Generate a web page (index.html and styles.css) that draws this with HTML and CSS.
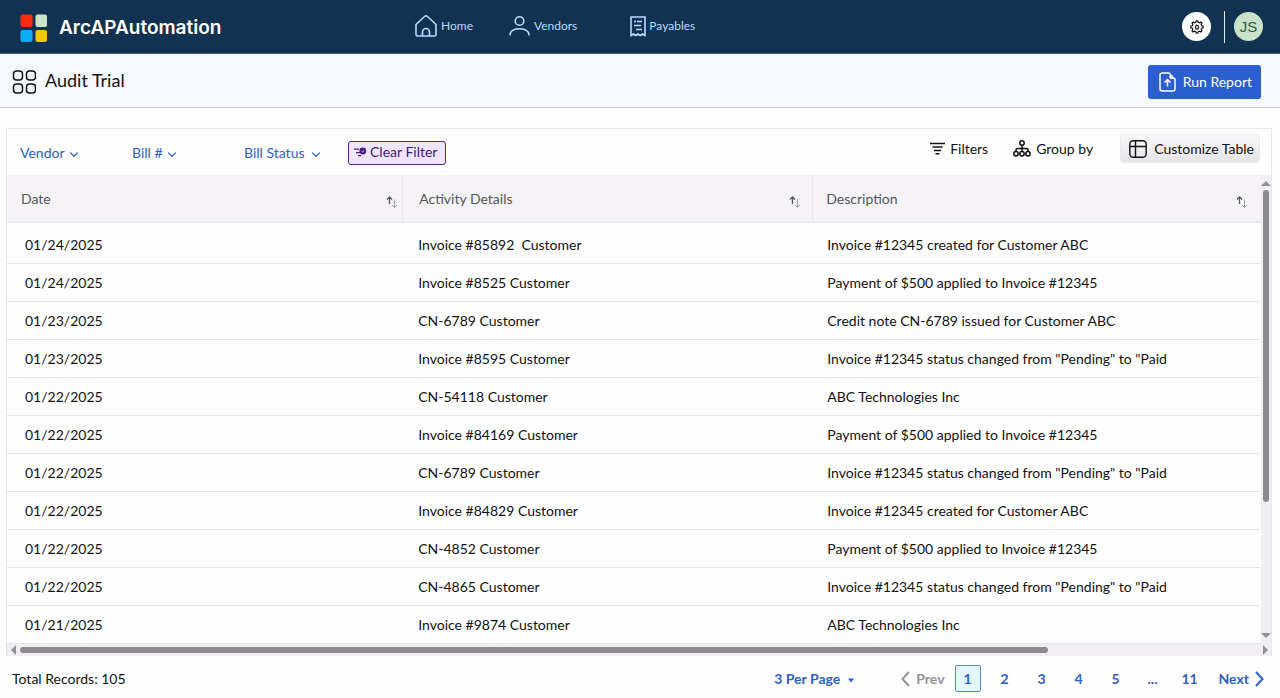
FILE: index.html
```html
<!DOCTYPE html>
<html lang="en">
<head>
<meta charset="utf-8">
<meta name="viewport" content="width=device-width, initial-scale=1">
<title>ArcAPAutomation - Audit Trial</title>
<link rel="stylesheet" href="styles.css">
</head>
<body>
<svg class="defs" aria-hidden="true">
  <symbol id="sort" viewBox="0 0 12 14"><path d="M3.5 9V2M1 4.5 3.5 2 6 4.500" fill="none" stroke="#555" stroke-width="1.300"/><path d="M8.500 4.500v8M6 10l2.500 2.500L11 10" fill="none" stroke="#a2a2a2"/></symbol>
  <symbol id="chevron" viewBox="0 0 8 6"><path d="M.7 1 4 4.400 7.300 1" fill="none" stroke="currentColor" stroke-width="1.200" stroke-linecap="round"/></symbol>
</svg>
<header class="topbar">
  <a class="brand" href="#">
    <svg width="28" height="28" viewBox="0 0 28 28"><rect x=".5" y=".5" width="12" height="12.500" rx="2" fill="#ff2a10"/><rect x="15.500" y=".5" width="11.500" height="12.500" rx="2" fill="#cbe3cd"/><rect x=".5" y="16" width="12" height="12" rx="2" fill="#08adf5"/><rect x="15.500" y="16" width="11.500" height="12" rx="2" fill="#f0c800"/></svg>
    <span>ArcAPAutomation</span>
  </a>
  <nav class="nav">
    <a href="#"><svg width="22" height="22" viewBox="0 0 22 22"><path d="M1 9.500 9.500 1.500Q11 .3 12.500 1.500L21 9.500V19.500Q21 21 19.500 21H2.500Q1 21 1 19.500ZM7.500 21V17a3.500 3.500 0 0 1 7 0v4"/></svg>Home</a>
    <a href="#"><svg width="21" height="22" viewBox="0 0 21 22"><circle cx="10.500" cy="6" r="4.300"/><path d="M1 20.500V19Q2.500 13.800 10.500 13.800T20 19v1.500"/></svg>Vendors</a>
    <a href="#"><svg width="16" height="22" viewBox="0 0 16 22"><path d="M1 20.500V2h14v18.500L12.600 19l-2.300 1.500L8 19l-2.300 1.500L3.400 19ZM4 6.500h2M7 6.500h5M4 10.500h7M6 14.500h6"/></svg>Payables</a>
  </nav>
  <div class="account">
    <button class="settings" aria-label="Settings"><svg width="14" height="14" viewBox="0 0 14 14"><path d="M5.800 2.300 6.300.8h1.400l.5 1.500 1.300.5 1.400-.7 1 1-.7 1.400.5 1.300 1.500.5v1.400l-1.500.5-.5 1.300.7 1.400-1 1-1.400-.7-1.300.5-.5 1.500H6.300l-.5-1.500-1.300-.5-1.400.7-1-1 .7-1.400-.5-1.300L.8 7.700V6.300l1.500-.5.5-1.300-.7-1.400 1-1 1.400.7Z"/><ellipse cx="7" cy="7.200" rx="1.500" ry="2"/></svg></button>
    <button class="avatar">JS</button>
  </div>
</header>
<section class="titlebar">
  <h1><svg width="24" height="24" viewBox="0 0 24 24"><rect x="1.500" y="1" width="9" height="9" rx="3"/><rect x="14.500" y="1" width="9" height="9" rx="3"/><rect x="1.500" y="14" width="9" height="9" rx="3"/><rect x="14.500" y="14" width="9" height="9" rx="3"/></svg><span>Audit Trial</span></h1>
  <button class="run"><svg width="17" height="20" viewBox="0 0 17 20"><path d="M10.500 1H3.500Q1 1 1 3v14q0 2 2.500 2h10q2.500 0 2.500-2V6.500M8.500 14.500V8M5.500 10.500l3-3 3 3" fill="none" stroke="#fff" stroke-width="1.500"/><path d="M10.500.5 16.500 7h-4.500q-1.500 0-1.500-1.500Z" fill="#fff"/></svg>Run Report</button>
</section>
<main>
  <section class="panel">
    <div class="toolbar">
      <div class="filters">
        <label class="pick"><select aria-label="Vendor"><option>Vendor</option></select><svg width="8" height="6"><use href="#chevron"/></svg></label>
        <label class="pick"><select aria-label="Bill number"><option>Bill #</option></select><svg width="8" height="6"><use href="#chevron"/></svg></label>
        <label class="pick"><select aria-label="Bill status"><option>Bill Status</option></select><svg width="8" height="6"><use href="#chevron"/></svg></label>
        <button class="clear"><svg width="13" height="10" viewBox="0 0 13 10"><circle cx="8.800" cy="4" r="3.400" fill="#4a1d84"/><path d="M7.800 4.300 8.600 5 10 3.300" stroke="#efe5fc" stroke-width=".8" fill="none"/><path d="M0 2.200h5M2 5.700h4M4 8.700h3" stroke="#4a1d84" stroke-width="1.200"/></svg>Clear Filter</button>
      </div>
      <div class="actions">
        <button class="action"><svg width="15" height="13" viewBox="0 0 15 13"><path d="M0 1.500h15M2.500 5h10M4 8.500h7M5.500 11.800h4" stroke="#111" stroke-width="1.600"/></svg>Filters</button>
        <button class="action group"><svg width="18" height="17" viewBox="0 0 18 17"><g fill="none" stroke="#111" stroke-width="1.500"><circle cx="9" cy="3" r="2.200"/><circle cx="3" cy="13.700" r="2.200"/><circle cx="9" cy="13.700" r="2.200"/><circle cx="15" cy="13.700" r="2.200"/><path d="M9 5.200v6M3 11.500V9.700Q3 8.500 4.500 8.500h9Q15 8.500 15 9.700v1.800"/></g></svg>Group by</button>
        <button class="action custom"><svg width="18" height="18" viewBox="0 0 18 18"><rect x=".8" y=".8" width="16.400" height="16.400" rx="3.500" fill="none" stroke="#111" stroke-width="1.400"/><path d="M6.500 1v16M1 6.500h16" stroke="#111" stroke-width="1.400"/></svg>Customize Table</button>
      </div>
    </div>
    <div class="grid">
      <table>
        <thead><tr>
          <th scope="col"><div class="head">Date<button aria-label="Sort by date"><svg width="12" height="14"><use href="#sort"/></svg></button></div></th>
          <th scope="col"><div class="head">Activity Details<button aria-label="Sort by activity"><svg width="12" height="14"><use href="#sort"/></svg></button></div></th>
          <th scope="col"><div class="head">Description<button aria-label="Sort by description"><svg width="12" height="14"><use href="#sort"/></svg></button></div></th>
        </tr></thead>
        <tbody>
          <tr><td>01/24/2025</td><td>Invoice #85892&nbsp; Customer</td><td>Invoice #12345 created for Customer ABC</td></tr>
          <tr><td>01/24/2025</td><td>Invoice #8525 Customer</td><td>Payment of $500 applied to Invoice #12345</td></tr>
          <tr><td>01/23/2025</td><td>CN-6789 Customer</td><td>Credit note CN-6789 issued for Customer ABC</td></tr>
          <tr><td>01/23/2025</td><td>Invoice #8595 Customer</td><td>Invoice #12345 status changed from "Pending" to "Paid</td></tr>
          <tr><td>01/22/2025</td><td>CN-54118 Customer</td><td>ABC Technologies Inc</td></tr>
          <tr><td>01/22/2025</td><td>Invoice #84169 Customer</td><td>Payment of $500 applied to Invoice #12345</td></tr>
          <tr><td>01/22/2025</td><td>CN-6789 Customer</td><td>Invoice #12345 status changed from "Pending" to "Paid</td></tr>
          <tr><td>01/22/2025</td><td>Invoice #84829 Customer</td><td>Invoice #12345 created for Customer ABC</td></tr>
          <tr><td>01/22/2025</td><td>CN-4852 Customer</td><td>Payment of $500 applied to Invoice #12345</td></tr>
          <tr><td>01/22/2025</td><td>CN-4865 Customer</td><td>Invoice #12345 status changed from "Pending" to "Paid</td></tr>
          <tr><td>01/21/2025</td><td>Invoice #9874 Customer</td><td>ABC Technologies Inc</td></tr>
        </tbody>
      </table>
      <div class="vbar" aria-hidden="true">
        <svg width="10" height="6" viewBox="0 0 10 6"><path d="M5 0 10 5H0Z"/></svg>
        <div class="track"><div class="thumb"></div></div>
        <svg width="10" height="6" viewBox="0 0 10 6"><path d="M0 0h10L5 5Z"/></svg>
      </div>
      <div class="hbar" aria-hidden="true">
        <svg width="5" height="10" viewBox="0 0 5 10"><path d="M5 0v10L0 5Z"/></svg>
        <div class="track"><div class="thumb"></div></div>
        <svg width="5" height="10" viewBox="0 0 5 10"><path d="M0 0v10L5 5Z"/></svg>
      </div>
    </div>
  </section>
  <footer>
    <span>Total Records: 105</span>
    <div class="paging">
      <label class="pick perpage"><select aria-label="Records per page"><option>3 Per Page</option></select><svg width="8" height="5" viewBox="0 0 8 5"><path d="M1 .5h6L4 4.500Z" fill="currentColor" stroke="none"/></svg></label>
      <nav class="pages" aria-label="Pages">
        <button class="prev" disabled><svg width="9" height="16" viewBox="0 0 9 16"><path d="M8 1 1.500 8 8 15"/></svg>Prev</button>
        <button class="page current" aria-current="page">1</button>
        <button class="page">2</button>
        <button class="page">3</button>
        <button class="page">4</button>
        <button class="page">5</button>
        <button class="page">...</button>
        <button class="page">11</button>
        <button class="next">Next<svg width="9" height="16" viewBox="0 0 9 16"><path d="M1 1l6.500 7L1 15"/></svg></button>
      </nav>
    </div>
  </footer>
</main>
</body>
</html>
```
FILE: styles.css
```css
* { box-sizing: border-box; }
body {
  margin: 0;
  background: #fefefe;
  color: #111;
  font: 14px/20px Lato, "Noto Sans", sans-serif;
}
svg { display: block; flex: none; }
button, select {
  appearance: none;
  margin: 0;
  padding: 0;
  border: 0;
  background: none;
  color: inherit;
  font: inherit;
}
a { color: inherit; text-decoration: none; }
.defs { position: absolute; width: 0; height: 0; }

.topbar {
  display: grid;
  grid-template-columns: 395px 1fr auto;
  align-items: center;
  height: 54px;
  padding: 0 17px 0 20px;
  background: #113250;
  border-bottom: 1px solid #45607a;
}
.brand {
  display: flex;
  align-items: center;
  gap: 11px;
  padding-top: 2px;
  color: #fff;
  font: 600 19px/24px Inter, sans-serif;
}
.nav { display: flex; padding-bottom: 1px; color: #b9dcff; font-size: 12px; }
.nav a { display: flex; align-items: center; gap: 4px; }
.nav a + a { margin-left: 36px; }
.nav a + a + a { gap: 3px; margin-left: 53px; }
.nav svg { fill: none; stroke: currentColor; stroke-width: 1.6; }
.account { display: flex; align-items: center; }
.settings {
  display: grid;
  place-items: center;
  width: 29px;
  height: 29px;
  margin-right: 13px;
  border-radius: 50%;
  background: #fff;
}
.settings svg { fill: none; stroke: #111; stroke-width: 1.2; }
.account::before { content: ""; order: 1; width: 1px; height: 32px; margin-right: 9px; background: #e6ebf0; }
.avatar {
  order: 2;
  width: 29px;
  height: 29px;
  border-radius: 50%;
  background: #c9e2c9;
  color: #2e5b3c;
  font: 15px/29px "Liberation Sans", Arial, sans-serif;
}

.titlebar {
  display: flex;
  align-items: center;
  justify-content: space-between;
  height: 54px;
  padding: 2px 19px 0 12px;
  background: #f5f9ff;
  border-bottom: 1px solid #c3c4cc;
}
h1 { display: flex; align-items: center; gap: 9px; margin: 0; font-size: 18px; font-weight: 400; }
h1 span { padding-bottom: 3px; }
h1 svg { fill: none; stroke: #111; stroke-width: 1.5; }
.run {
  display: flex;
  align-items: center;
  gap: 7px;
  height: 34px;
  padding: 0 9px 0 11px;
  border-radius: 3px;
  background: #2b5fd0;
  color: #fff;
}

main { padding: 20px 8px 0 6px; }
.panel { border: 1px solid #e6e5e8; border-bottom: 0; }
.toolbar {
  display: flex;
  justify-content: space-between;
  height: 46px;
  padding: 0 11px 0 13px;
}
.filters { display: flex; align-items: center; padding-top: 2px; color: #2d5fc4; }
.pick { display: flex; align-items: center; gap: 5px; }
.pick svg { margin-top: 3px; }
.pick:nth-child(1) { margin-right: 54px; }
.pick:nth-child(2) { margin-right: 68px; }
.pick:nth-child(3) { gap: 7px; margin-right: 28px; }
.clear {
  display: flex;
  align-items: center;
  gap: 3px;
  height: 24px;
  padding: 0 8px 2px 5px;
  border: 1px solid #512a8c;
  border-radius: 3px;
  background: #efe5fc;
  color: #42197a;
}
.actions { display: flex; align-items: center; height: 38px; padding-top: 1px; }
.action { display: flex; align-items: center; gap: 5px; }
.group { margin: 0 27px 0 25px; }
.custom {
  gap: 7px;
  height: 29px;
  padding: 0 5px 0 8px;
  border: 1px solid #ebeaed;
  border-radius: 3px;
  background: linear-gradient(#f8f7f9, #e6e4e8);
}

.grid { display: grid; grid-template-columns: 1fr 10px; }
table { width: 100%; border-collapse: separate; border-spacing: 0; table-layout: fixed; }
th {
  width: 32.7%;
  height: 48px;
  padding: 2px 13px 0 13px;
  border-bottom: 2px solid #ebeaed;
  background: #f5f3f7;
  color: #55565a;
  font-weight: 400;
  text-align: left;
}
th:first-child { width: 31.6%; padding: 2px 4px 0 14px; }
th:nth-child(2) { padding: 2px 11px 0 16px; }
th:last-child { width: auto; }
th:not(:last-child) { border-right: 1px solid #ece3e4; }
.head { display: flex; align-items: center; justify-content: space-between; }
.head button { padding-top: 6px; }
td { height: 38px; padding: 0 14px; border-bottom: 1px solid #e5e4e7; }
td:first-child { padding-left: 18px; }
td:nth-child(2) { padding-left: 15px; }
tbody tr:first-child td { height: 41px; padding-top: 3px; }
.vbar {
  display: flex;
  flex-direction: column;
  align-items: center;
  gap: 3px;
  padding: 6px 0 5px;
  background: #f0eef2;
}
.vbar svg, .hbar svg { fill: #929094; }
.track { flex: 1; }
.thumb { border-radius: 3px; background: #8c8a8d; }
.vbar .thumb { width: 6px; height: 71%; }
.hbar {
  grid-column: 1 / -1;
  display: flex;
  align-items: center;
  gap: 4px;
  height: 12px;
  padding: 0 3px 0 4px;
  background: #f0eef2;
}
.hbar .thumb { width: 83%; height: 6px; }

footer {
  display: flex;
  align-items: center;
  justify-content: space-between;
  padding: 9px 8px 5px 6px;
}
.paging { display: flex; align-items: center; color: #2d5fc4; font-weight: 700; }
.perpage.pick { gap: 6px; margin-right: 46px; }
.pages { display: flex; align-items: center; }
.pages svg { fill: none; stroke: currentColor; stroke-width: 2; }
.prev, .next { display: flex; align-items: center; gap: 6px; }
.prev { margin-right: 10px; color: #929297; }
.page { width: 26px; height: 27px; margin-right: 11px; }
.current { border: 1px solid #5b87c9; border-radius: 2px; background: #e3f7ff; }
.next { margin-left: 5px; }
```
